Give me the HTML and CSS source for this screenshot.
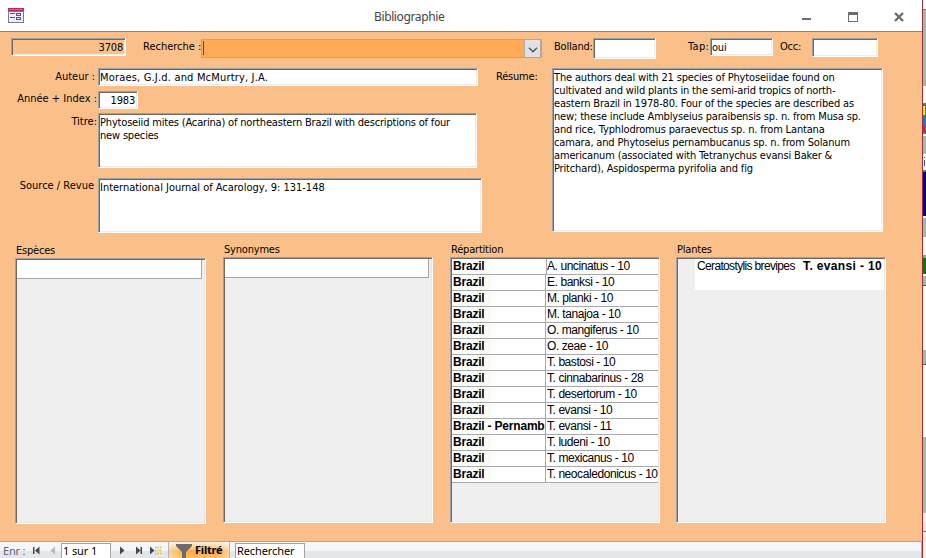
FILE: index.html
```html
<!DOCTYPE html>
<html lang="fr">
<head>
<meta charset="utf-8">
<title>Bibliographie</title>
<link rel="stylesheet" href="styles.css">
</head>
<body>
<div class="screen">
<main class="window">
  <header class="titlebar">
    <svg class="form-icon" width="16" height="15" viewBox="0 0 16 15" shape-rendering="crispEdges"><path fill="#77779f" d="M0 0h16v15H0z"/><path fill="#eceefa" d="M1 4h14v10H1z"/><path fill="#b42b60" d="M0 0h16v3H0z"/><path fill="#d0668f" d="M1 1h14v1H1z"/><path fill="#55557f" d="M2 5h5v1H2zM2 9h5v1H2zM8 5h5v3H8zM8 9h5v3H8z"/><path fill="#dfe3f2" d="M9 6h3v1H9zM9 10h3v1H9z"/></svg>
    <h1>Bibliographie</h1>
    <svg class="controls" width="110" height="16" viewBox="0 0 110 16" shape-rendering="crispEdges"><path fill="#6d6d6d" d="M0 10h9v2H0z"/><path fill="#6d6d6d" fill-rule="evenodd" d="M46 4h10v10H46zM47 7h8v6h-8z"/><path d="M93 5l8 8M101 5l-8 8" stroke="#6d6d6d" stroke-width="2.400" shape-rendering="auto"/></svg>
  </header>

  <section class="form">
    <div class="top-row">
      <div class="box id-box">3708</div>
      <span class="lab search-label">Recherche :</span>
      <div class="combo"><i class="caret"></i><span class="drop"><svg width="10" height="6" viewBox="0 0 10 6"><path d="M1 .8l4 4 4-4" fill="none" stroke="#505050" stroke-width="1.3"/></svg></span></div>
      <span class="lab bolland-label">Bolland:</span><div class="box bolland"></div>
      <span class="lab tap-label">Tap:</span><div class="box tap">oui</div>
      <span class="lab occ-label">Occ:</span><div class="box occ"></div>
    </div>

    <div class="details">
      <div class="fields">
        <span class="lab r-author">Auteur :</span><div class="box author"><span class="t-author">Moraes, G.J.d. and McMurtry, J.A.</span></div>
        <span class="lab r-year">Année + Index :</span><div class="box year">1983</div>
        <span class="lab r-title">Titre:</span><div class="box title"><span class="t-title">Phytoseiid mites (Acarina) of northeastern Brazil with descriptions of four<br>new species</span></div>
        <span class="lab r-source">Source / Revue</span><div class="box source"><span class="t-source">International Journal of Acarology, 9: 131-148</span></div>
      </div>
      <span class="lab resume-label">Résume:</span>
      <div class="box resume">The authors deal with 21 species of Phytoseiidae found on<br>cultivated and wild plants in the semi-arid tropics of north-<br>eastern Brazil in 1978-80. Four of the species are described as<br>new; these include Amblyseius paraibensis sp. n. from Musa sp.<br>and rice, Typhlodromus paraevectus sp. n. from Lantana<br>camara, and Phytoseius pernambucanus sp. n. from Solanum<br>americanum (associated with Tetranychus evansi Baker &amp;<br>Pritchard), Aspidosperma pyrifolia and fig</div>
    </div>

    <div class="lists">
      <section class="species"><h2>Espèces</h2><div class="list"><div class="empty-row"></div></div></section>
      <section class="synonyms"><h2>Synonymes</h2><div class="list"><div class="empty-row"></div></div></section>
      <section class="distribution"><h2>Répartition</h2><div class="list">
        <div class="row first"><b>Brazil</b><span>A. uncinatus - 10</span></div>
        <div class="row"><b>Brazil</b><span>E. banksi - 10</span></div>
        <div class="row"><b>Brazil</b><span>M. planki - 10</span></div>
        <div class="row"><b>Brazil</b><span>M. tanajoa - 10</span></div>
        <div class="row"><b>Brazil</b><span>O. mangiferus - 10</span></div>
        <div class="row"><b>Brazil</b><span>O. zeae - 10</span></div>
        <div class="row"><b>Brazil</b><span>T. bastosi - 10</span></div>
        <div class="row"><b>Brazil</b><span>T. cinnabarinus - 28</span></div>
        <div class="row"><b>Brazil</b><span>T. desertorum - 10</span></div>
        <div class="row"><b>Brazil</b><span>T. evansi - 10</span></div>
        <div class="row"><b>Brazil - Pernamb</b><span>T. evansi - 11</span></div>
        <div class="row"><b>Brazil</b><span>T. ludeni - 10</span></div>
        <div class="row"><b>Brazil</b><span>T. mexicanus - 10</span></div>
        <div class="row"><b>Brazil</b><span>T. neocaledonicus - 10</span></div>
      </div></section>
      <section class="plants"><h2>Plantes</h2><div class="list"><div class="plant-row"><span>Ceratostylis brevipes</span><b>T. evansi - 10</b></div></div></section>
    </div>
  </section>

  <footer class="nav">
    <span class="enr">Enr :</span>
    <svg class="prev" width="24" height="9" viewBox="0 0 24 9"><path fill="#444951" d="M0 1h1.500v7H0zM6.500 .5v8L2 4.500z"/><path fill="#b5b8bd" d="M22 .5v8l-4.500-4z"/></svg>
    <div class="nav-box page">1 sur 1</div>
    <svg class="next" width="43" height="9" viewBox="0 0 43 9"><path fill="#444951" d="M0 .5v8l4.500-4zM16 .5v8l4.500-4zM20.500 1H22v7h-1.500zM30 .5v8l4.500-4z"/><path stroke="#e2bf2b" stroke-width="1.500" stroke-dasharray="1.500 1" d="M35 1.500h7M35 4.500h7M35 7.500h7"/><path fill="#f8e46c" d="M37 3h3v3h-3z"/></svg>
    <div class="filter"><svg width="16" height="14" viewBox="0 0 16 14"><path fill="#6b6b6b" d="M0 0h16v2l-6 6v6H6V8L0 2z"/></svg><span>Filtré</span></div>
    <div class="nav-box find">Rechercher</div>
  </footer>
</main>
<aside class="behind">
  <i class="s1"></i><i class="s2"></i><i class="s3"></i><i class="s4"></i><i class="s5"></i><i class="s6"></i><i class="s7"></i><i class="s8"></i><i class="s9"></i><i class="s10"></i><i class="s11"></i><i class="s12"></i><i class="s13"></i><i class="s14"></i><i class="s15"></i><i class="s16"></i><i class="s17"></i><i class="s18"></i>
</aside>
</div>
</body>
</html>
```
FILE: styles.css
```css
* { box-sizing: border-box; }
body { margin: 0; background: #fff; color: #000; font: 11px/13px "DejaVu Sans Condensed", "DejaVu Sans", sans-serif; letter-spacing: -0.2px; }
h1, h2 { margin: 0; font-weight: normal; }
.screen { display: flex; width: 926px; height: 558px; overflow: hidden; white-space: nowrap; }
.window { width: 923px; height: 558px; border-right: 1px solid #a92b33; display: flex; flex-direction: column; }

.titlebar { height: 32px; flex: none; border-bottom: 1px solid #858585; display: flex; align-items: flex-start; }
.form-icon { margin: 8px 0 0 8px; }
.titlebar h1 { margin: 8px 0 0 350px; width: 80px; font: 12px/17px "Noto Sans", sans-serif; letter-spacing: -0.38px; color: #444; }
.controls { margin: 8px 0 0 348px; }

.form { height: 509px; flex: none; background: #fbc08a; }
.box { border: 1px solid; border-color: #a0a0a0 #fff #fff #a0a0a0; box-shadow: inset 1px 1px #696969, inset -1px -1px #ececec; background: #fff; padding: 2px 1px; flex: none; }
.lab { flex: none; }

.top-row { height: 36px; display: flex; align-items: flex-start; padding-top: 6px; }
.top-row .lab { margin-top: 2px; }
.id-box { width: 115px; height: 18px; margin-left: 11px; text-align: right; background: #fbc08a; padding-right: 2px; }
.search-label { width: 58px; margin-left: 17px; letter-spacing: 0; }
.combo { width: 341px; height: 19px; margin-top: 1px; border: 1px solid #a9a9a9; background: #ffab57; display: flex; justify-content: space-between; }
.caret { width: 1px; height: 14px; margin: 1px 0 0 1px; background: #28516b; }
.drop { width: 17px; height: 17px; background: #e1e1e1; border: 1px solid #adadad; border-width: 0 1px 0 1px; display: flex; align-items: center; justify-content: center; padding-top: 2px; }
.bolland-label { width: 39px; margin-left: 12px; }
.bolland { width: 63px; height: 21px; }
.tap-label { width: 22px; margin-left: 32px; letter-spacing: 0.3px; }
.tap { width: 63px; height: 18px; }
.occ-label { width: 32px; margin-left: 7px; }
.occ { width: 66px; height: 19px; }

.details { height: 165px; display: flex; align-items: flex-start; }
.fields { width: 482px; display: grid; grid-template-columns: 98px 1fr; grid-template-rows: 23px 22px 65px 55px; align-items: start; }
.fields .lab { text-align: right; padding-top: 2px; letter-spacing: 0; }
.fields .r-author { padding-right: 3px; }
.fields .r-year { padding: 1px 1px 0 0; }
.fields .r-title { padding: 2px 1px 0 0; }
.fields .r-source { padding: 1px 4px 0 0; }
.author { width: 380px; height: 18px; }
.t-author { letter-spacing: 0.18px; }
.t-title { letter-spacing: -0.18px; }
.t-source { letter-spacing: -0.02px; }
.year { width: 40px; height: 18px; text-align: right; padding-right: 2px; }
.title { width: 379px; height: 55px; }
.source { width: 384px; height: 55px; }
.resume-label { width: 42px; margin: 2px 14px 0; }
.resume { width: 331px; height: 164px; letter-spacing: -0.16px; }

.lists { display: flex; align-items: flex-start; margin-top: 10px; }
.lists section { flex: none; width: 210px; }
.lists h2 { height: 14px; font-size: 11px; line-height: 13px; padding-left: 1px; }
.lists .species { width: 191px; margin: 1px 17px 0 15px; }
.synonyms { margin-right: 17px; }
.distribution { margin-right: 16px; }
.list { height: 266px; background: #efefef; border: 1px solid; border-color: #a0a0a0 #fff #fff #a0a0a0; box-shadow: inset 1px 1px #696969, inset -1px -1px #e8e8e8; padding: 1px; }
.empty-row { height: 19px; width: 204px; background: #fff; border: 1px solid #a6a6a6; border-width: 0 1px 1px 0; }
.species .empty-row { width: 185px; }
.row { height: 16px; background: #fff; border-bottom: 1px solid #a9a9ad; display: flex; font: 12px/15px "Liberation Sans", Arial, sans-serif; letter-spacing: -0.43px; }
.row b { flex: none; width: 93px; padding-left: 1px; letter-spacing: -0.2px; }
.row span { flex: 1; border-left: 1px solid #a9a9ad; padding-left: 1px; }
.row.first b { width: 94px; }
.row.first span { padding-left: 0; }
.plant-row { height: 31px; margin-left: 17px; background: #fff; display: flex; justify-content: space-between; padding: 0 2px; font: 12px/15px "Liberation Sans", Arial, sans-serif; letter-spacing: -0.65px; }
.plant-row b { letter-spacing: 0.35px; }

.nav { height: 17px; flex: none; border-top: 1px solid #a5a8ad; border-right: 1px solid #a5a8ad; background: linear-gradient(#f5f6f8 0 9px, #e4e6ea 9px); display: flex; align-items: flex-start; font: 11px/14px "Noto Sans", sans-serif; letter-spacing: 0; }
.enr { width: 30px; margin-left: 3px; color: #5b6472; padding-top: 2px; letter-spacing: -0.2px; }
.prev { margin-top: 4px; }
.nav-box { height: 15px; margin-top: 1px; border: 1px solid #a0a3a8; border-bottom: 0; background: #fff; padding: 0 0 0 1px; letter-spacing: -0.1px; }
.page { width: 50px; margin-left: 4px; }
.next { margin: 4px 0 0 9px; }
.filter { width: 62px; height: 16px; margin-left: 5px; border: 1px solid #b4b6ba; border-width: 0 1px; background: linear-gradient(to right, #fff6, #fff0 30% 80%, #fff6), linear-gradient(#fdf2e2, #fbc47e 7px, #ffa83c 9px, #ffc16a); display: flex; font-weight: bold; letter-spacing: -0.2px; }
.filter svg { margin: 2px 3px 0 7px; }
.filter span { padding-top: 1px; }
.find { width: 70px; margin-left: 5px; }

.behind { width: 3px; display: flex; flex-direction: column; }
.behind i { flex: none; background: #98bdb9; }
.behind .s1 { height: 10px; background: #fff; border-bottom: 1px solid #777; }
.behind .s2 { height: 76px; }
.behind .s3 { height: 18px; background: #fff; border-bottom: 1px solid #777; }
.behind .s4 { height: 30px; background: linear-gradient(to right, transparent 0 2px, #0c82ca 2px), linear-gradient(#0c82ca 0 2px, #fff000 2px 11px, #0c82ca 11px 22px, #e02020 22px 28px, #0c82ca 28px); }
.behind .s5 { height: 2px; background: #fff; }
.behind .s6 { height: 18px; }
.behind .s7 { height: 16px; background: linear-gradient(to right, #fff 0 1px, transparent 1px 2px, #fff 2px), linear-gradient(#fff 0 3px, #3d4d93 3px 4px, #fff 4px 6px, #3d4d93 6px 12px, #fff 12px); }
.behind .s8 { height: 46px; background: #0000a0; border-top: 2px solid #777; }
.behind .s9 { height: 2px; background: #fff; }
.behind .s10 { height: 19px; }
.behind .s11 { height: 18px; background: #fff; }
.behind .s12 { height: 19px; background: #008000; border-top: 3px solid #8d9f9d; }
.behind .s13 { height: 2px; background: #fff; }
.behind .s14 { height: 10px; border-bottom: 1px solid #555; }
.behind .s15 { height: 64px; background: #fff; }
.behind .s16 { height: 15px; border-bottom: 1px solid #555; }
.behind .s17 { height: 72px; background: #fff; }
.behind .s18 { height: 121px; background: linear-gradient(#98bdb9 0 76px, #f4f4f4 76px 85px, #e4e6ea 85px 94px, #777 94px 95px, #eee 95px); }
```
